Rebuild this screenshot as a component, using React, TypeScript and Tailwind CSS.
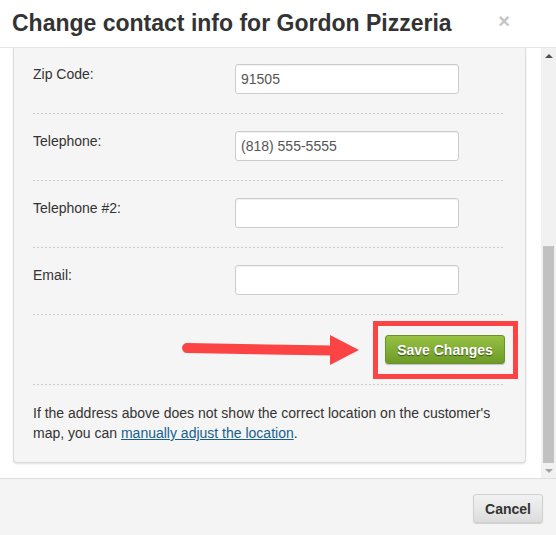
import * as React from "react";

type Field = { label: string; value: string };

const FIELDS: Field[] = [
  { label: "Zip Code:", value: "91505" },
  { label: "Telephone:", value: "(818) 555-5555" },
  { label: "Telephone #2:", value: "" },
  { label: "Email:", value: "" },
];

function Divider() {
  return <div className="h-px bg-[linear-gradient(to_right,#c9c9c9_50%,transparent_50%)] bg-[length:4px_1px]" />;
}

function FieldRow({ field, first }: { field: Field; first: boolean }) {
  return (
    <div className={`flex items-start pb-[19px] ${first ? "pt-[16px]" : "pt-[17px]"}`}>
      <label className="w-[202px] text-[14px] leading-[20px] text-[#333]">{field.label}</label>
      <input
        type="text"
        defaultValue={field.value}
        className="h-[30px] w-[224px] rounded-[3px] border border-[#ccc] bg-white px-[5px] text-[14px] text-[#555] shadow-[inset_0_1px_1px_rgba(0,0,0,0.06)] outline-none"
      />
    </div>
  );
}

function Scrollbar() {
  return (
    <div className="flex w-[15px] flex-col bg-[#f1f1f1]">
      <div className="flex h-[15px] items-center justify-center">
        <span className="h-0 w-0 border-x-[4px] border-b-[4px] border-x-transparent border-b-[#505050]" />
      </div>
      <div className="flex flex-1 flex-col justify-end">
        <div className="mx-[2px] h-[217px] bg-[#c1c1c1]" />
      </div>
      <div className="flex h-[15px] items-center justify-center">
        <span className="h-0 w-0 border-x-[4px] border-t-[4px] border-x-transparent border-t-[#a3a3a3]" />
      </div>
    </div>
  );
}

export default function App() {
  return (
    <div className="flex h-[535px] w-[556px] flex-col overflow-hidden bg-white font-['Liberation_Sans',Arial,sans-serif]">
      <header className="flex h-[48px] shrink-0 items-center justify-between border-b border-[#e5e5e5] pl-[12px] pr-[46px]">
        <h1 className="text-[23px] font-bold text-[#333]">Change contact info for Gordon Pizzeria</h1>
        <span className="mt-[-5px] text-[20px] font-bold leading-none text-[#c4c4c4]">×</span>
      </header>

      <div className="flex h-[430px] shrink-0 overflow-hidden">
        <div className="flex-1 pl-[13px] pr-[15px] pb-[15px]">
          <div className="rounded-b-[4px] border border-t-0 border-[#dcdcdc] bg-[#f5f5f5] pl-[19px] pr-[21px] shadow-[0_1px_2px_rgba(0,0,0,0.12)]">
            {FIELDS.map((f, i) => (
              <React.Fragment key={f.label}>
                <FieldRow field={f} first={i === 0} />
                <Divider />
              </React.Fragment>
            ))}

            <div className="relative flex justify-end py-[20px] mr-[-1px]">
              <svg className="absolute left-[149px] top-[19px]" width="180" height="32" viewBox="0 0 180 32">
                <line x1="5" y1="14" x2="150" y2="16.5" stroke="#fd4444" strokeWidth="10" strokeLinecap="round" />
                <polygon points="148,1 148,31 177,16" fill="#fd4444" />
              </svg>
              <div className="relative">
                <span className="pointer-events-none absolute -bottom-[15px] -left-[12px] -right-[13px] -top-[14px] border-[5px] border-[#fd4444]" />
                <button
                  type="button"
                  className="h-[29px] w-[120px] rounded-[3px] border border-[#6b9229] bg-[linear-gradient(to_bottom,#97c142,#6c9b28)] pt-px text-[14px] font-bold text-white [text-shadow:0_1px_1px_rgba(0,0,0,0.55)] shadow-[0_1px_1px_rgba(0,0,0,0.2)]"
                >
                  Save Changes
                </button>
              </div>
            </div>
            <Divider />

            <p className="pt-[18px] pb-[19px] text-[14px] leading-[20px] text-[#333]">
              If the address above does not show the correct location on the customer's map, you can{" "}
              <a href="#" className="text-[#15608f] underline">
                manually adjust the location
              </a>
              .
            </p>
          </div>
        </div>
        <Scrollbar />
      </div>

      <footer className="flex flex-1 items-start justify-end border-t border-[#dedede] bg-[#f4f4f4] pr-[13px] pt-[15px]">
        <button
          type="button"
          className="h-[29px] w-[70px] rounded-[3px] border border-[#d0d0d0] bg-[linear-gradient(to_bottom,#f2f2f2,#dcdcdc)] pt-px text-[14px] font-bold text-[#333] shadow-[0_1px_1px_rgba(0,0,0,0.15)]"
        >
          Cancel
        </button>
      </footer>
    </div>
  );
}
